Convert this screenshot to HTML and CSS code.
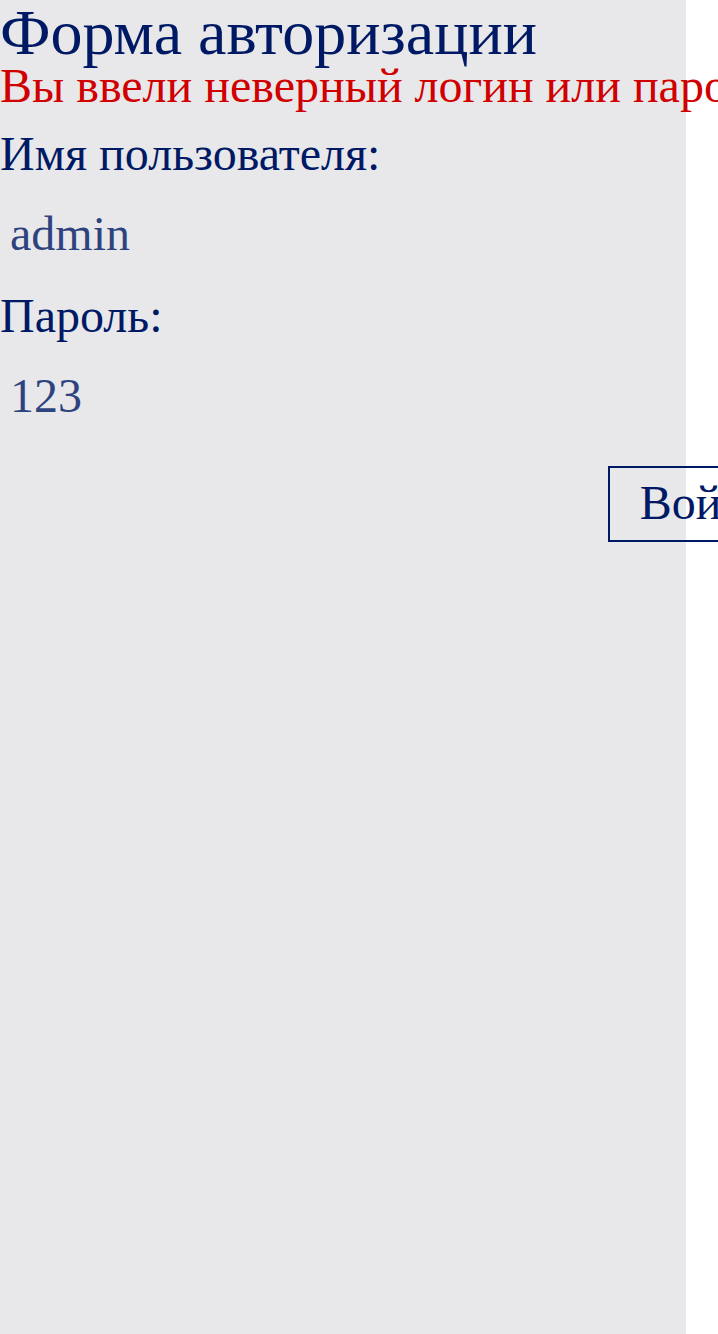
FILE: index.html
```html
<!DOCTYPE html>
<html lang="ru">
<head>
<meta charset="utf-8">
<title>Форма авторизации</title>
<link rel="stylesheet" href="styles.css">
</head>
<body>
<main class="page">
<form class="login">
<h1 class="login-title">Форма авторизации</h1>
<p class="login-error">Вы ввели неверный логин или пароль</p>
<label class="login-label" for="user">Имя пользователя:</label>
<input class="login-input" id="user" type="text" value="admin">
<label class="login-label" for="password">Пароль:</label>
<input class="login-input" id="password" type="text" value="123">
<button class="login-button" type="submit">Войти</button>
</form>
</main>
</body>
</html>
```
FILE: styles.css
```css
* { box-sizing: border-box; }
html { overflow: hidden; }
body { margin: 0; font-family: "Liberation Serif", "Times New Roman", serif; font-size: 48px; color: #001965; background: #fff; }
.page { min-height: 100vh; margin-right: 32px; background: #e8e8ea; }
.login { display: flex; flex-direction: column; align-items: flex-start; width: 800px; }
.login-title { margin: 0; font-size: 64px; font-weight: 400; line-height: 66px; }
.login-error { margin: 0 0 4px; line-height: 40px; color: #d00000; white-space: nowrap; }
.login-label { margin-top: 16px; line-height: 56px; }
.login-input { width: 100%; height: 78px; margin-top: 12px; padding: 0 10px; border: 0; background: transparent; font: inherit; color: inherit; opacity: 0.8; }
.login-button { align-self: flex-end; height: 76px; margin-top: 32px; padding: 0 30px 4px; border: 2px solid #001965; background: transparent; font: inherit; color: inherit; }
```
